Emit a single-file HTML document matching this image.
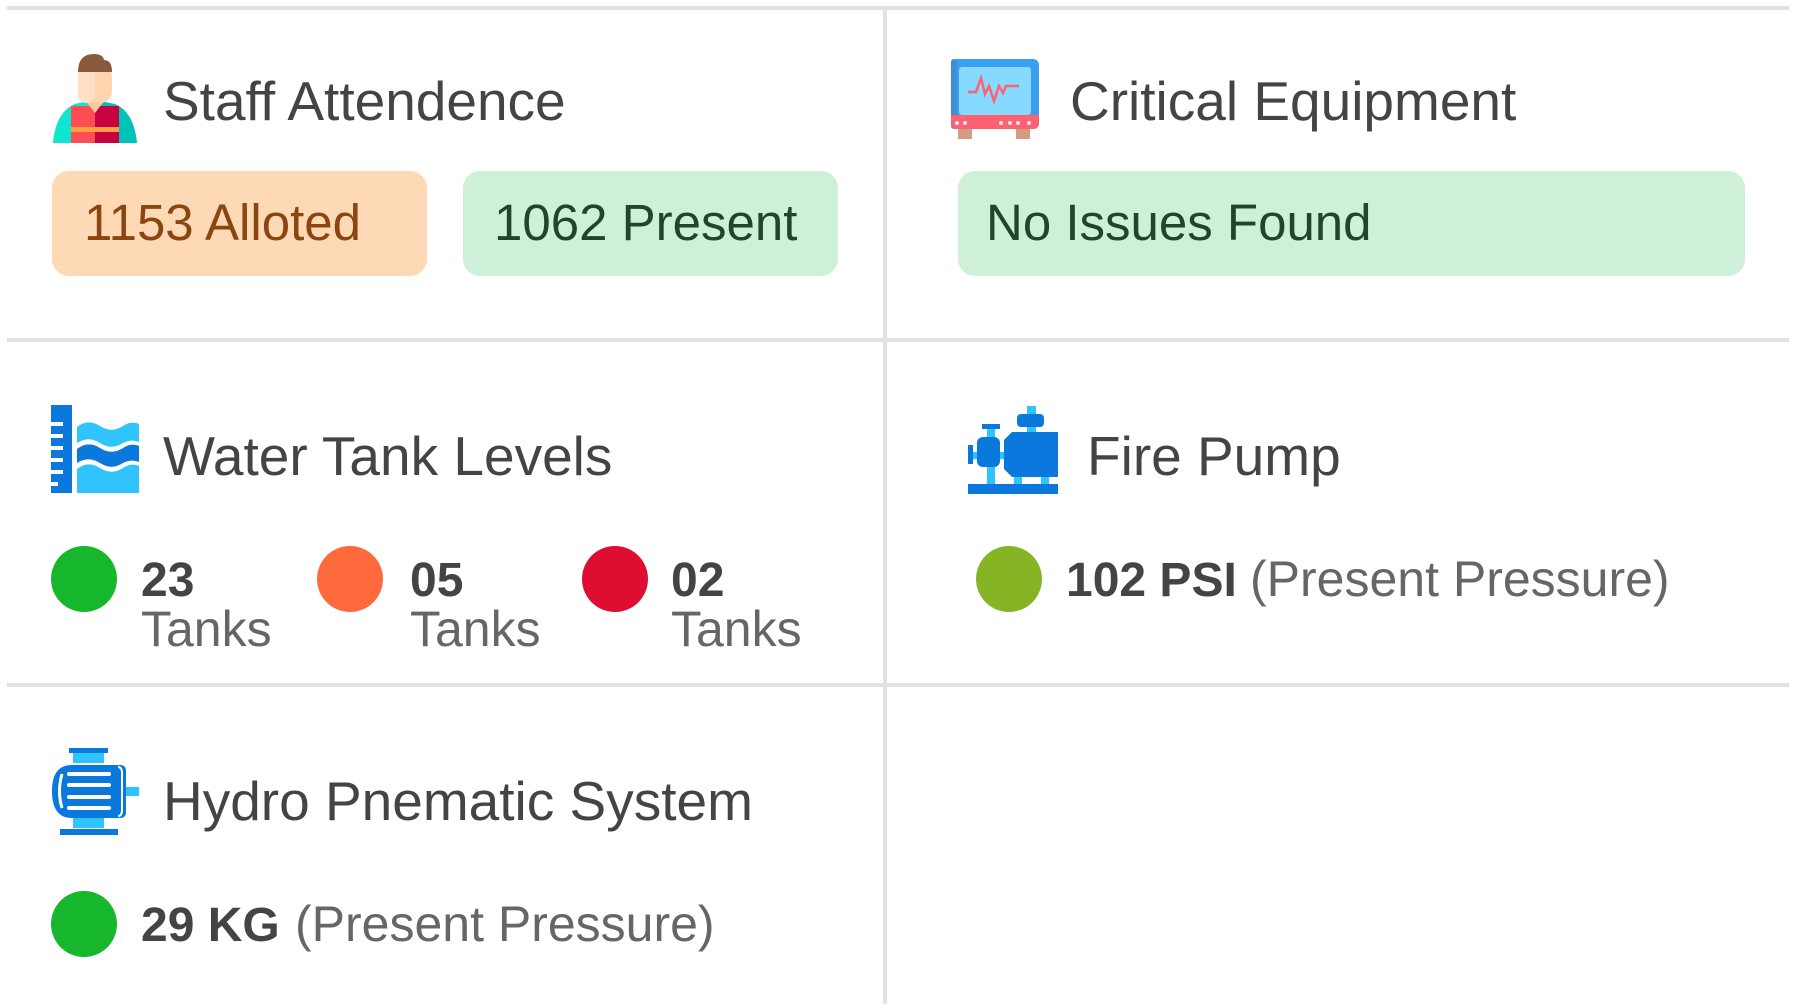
<!DOCTYPE html>
<html><head><meta charset="utf-8"><style>
html,body{margin:0;padding:0;background:#fff;}
svg{display:block}
text{font-family:"Liberation Sans",sans-serif;}
</style></head><body>
<svg width="1794" height="1004" viewBox="0 0 1794 1004" xmlns="http://www.w3.org/2000/svg">
<rect x="7" y="6" width="1782" height="4" fill="#e2e2e2"/>
<rect x="7" y="338" width="1782" height="4" fill="#e2e2e2"/>
<rect x="7" y="683" width="1782" height="4" fill="#e2e2e2"/>
<rect x="883" y="10" width="4" height="994" fill="#e2e2e2"/>

<!-- staff icon -->
<g>
<path d="M53 143 Q56 112 75 104 L95 100 L115 104 Q134 112 137 143 Z" fill="#00c2b8"/>
<path d="M53 143 Q56 112 75 104 L95 100 L95 143 Z" fill="#0ee6cf"/>
<rect x="71" y="106" width="24" height="37" fill="#ff4d55"/>
<rect x="95" y="106" width="24" height="37" fill="#c8003f"/>
<rect x="71" y="127" width="48" height="5" fill="#ffa143"/>
<path d="M85 100 L95 113 L105 100 Z" fill="#ffc89a"/>
<rect x="78" y="65" width="34" height="38" rx="12" fill="#ffd5b0"/>
<rect x="78" y="65" width="17" height="38" rx="8" fill="#ffe0c4"/>
<path d="M78 72 Q78 54 94 54 Q103 54 104 60 Q112 60 112 72 Z" fill="#8b5a3c"/>
</g>
<text x="163" y="120" font-size="55" fill="#444">Staff Attendence</text>

<rect x="52" y="171" width="375" height="105" rx="17" fill="#fdd9b5"/>
<text x="84" y="240" font-size="51" fill="#8b4510">1153 Alloted</text>
<rect x="463" y="171" width="375" height="105" rx="17" fill="#cff0d8"/>
<text x="494" y="240" font-size="51" fill="#1d4727">1062 Present</text>

<!-- monitor -->
<g>
<rect x="958" y="128" width="14" height="11" fill="#d29d82"/>
<rect x="1016" y="128" width="14" height="11" fill="#d29d82"/>
<rect x="951" y="59" width="88" height="70" rx="6" fill="#3a9ff0"/>
<rect x="951" y="59" width="6" height="70" rx="3" fill="#3f8fd6"/>
<rect x="959" y="67" width="72" height="48" rx="3" fill="#86d9ff"/>
<path d="M951 115 L1039 115 L1039 123 Q1039 129 1033 129 L957 129 Q951 129 951 123 Z" fill="#ff6170"/>
<g fill="#dfe6ff"><circle cx="957" cy="123" r="2"/><circle cx="965" cy="123" r="2"/><circle cx="1001" cy="123" r="2"/><circle cx="1010" cy="123" r="2"/><circle cx="1018" cy="123" r="2"/><circle cx="1029" cy="123" r="2"/></g>
<polyline points="968,92 976,92 981,78 985,94 989,86 994,101 999,86 1003,93 1006,86 1019,86" fill="none" stroke="#ff6170" stroke-width="2.5"/>
</g>
<text x="1070" y="120" font-size="55" fill="#444">Critical Equipment</text>
<rect x="958" y="171" width="787" height="105" rx="17" fill="#cff0d8"/>
<text x="986" y="240" font-size="51" fill="#1d4727">No Issues Found</text>

<!-- water icon -->
<g>
<rect x="51" y="405" width="21" height="88" fill="#0a78dc"/>
<g fill="#fff"><rect x="51" y="422" width="12" height="4"/><rect x="51" y="434" width="12" height="4"/><rect x="51" y="446" width="12" height="4"/><rect x="51" y="458" width="12" height="4"/><rect x="51" y="470" width="12" height="4"/><rect x="51" y="482" width="7" height="4"/></g>
<path d="M77 427 C85 421 92 421 100 426 C108 431 115 431 123 426 C129 422 134 422 139 424 L139 442 C134 440 129 440 123 443 C115 448 108 448 100 443 C92 438 85 438 77 443 Z" fill="#2fc4fb"/>
<path d="M77 449 C85 443 92 443 100 448 C108 453 115 453 123 448 C129 444 134 444 139 446 L139 462 C134 460 129 460 123 463 C115 468 108 468 100 463 C92 458 85 458 77 463 Z" fill="#0a78dc"/>
<path d="M77 469 C85 463 92 463 100 468 C108 473 115 473 123 468 C129 464 134 464 139 466 L139 493 L77 493 Z" fill="#2fc4fb"/>
</g>
<text x="163" y="475" font-size="55" fill="#444">Water Tank Levels</text>

<circle cx="84" cy="579" r="33" fill="#16b72c"/>
<text x="141" y="596" font-size="48" font-weight="bold" fill="#444">23</text>
<text x="141" y="646" font-size="50" fill="#666">Tanks</text>
<circle cx="350" cy="579" r="33" fill="#ff6a3d"/>
<text x="410" y="596" font-size="48" font-weight="bold" fill="#444">05</text>
<text x="410" y="646" font-size="50" fill="#666">Tanks</text>
<circle cx="615" cy="579" r="33" fill="#e00d33"/>
<text x="671" y="596" font-size="48" font-weight="bold" fill="#444">02</text>
<text x="671" y="646" font-size="50" fill="#666">Tanks</text>

<!-- fire pump icon -->
<g>
<rect x="987" y="427" width="8" height="58" fill="#2fc4fb"/>
<rect x="982" y="424" width="18" height="5" fill="#0a78dc"/>
<rect x="1027" y="406" width="9" height="28" fill="#2fc4fb"/>
<rect x="1017" y="414" width="27" height="13" rx="4" fill="#0a78dc"/>
<rect x="1014" y="474" width="8" height="11" fill="#2fc4fb"/>
<rect x="1041" y="474" width="8" height="11" fill="#2fc4fb"/>
<rect x="973" y="452" width="32" height="7" fill="#2fc4fb"/>
<rect x="968" y="445" width="5" height="19" fill="#0a78dc"/>
<rect x="977" y="437" width="23" height="30" rx="6" fill="#0a78dc"/>
<path d="M1012 432 L1058 432 L1058 477 L1012 477 L1004 469 L1004 440 Z" fill="#0a78dc"/>
<rect x="968" y="484" width="90" height="10" fill="#0a78dc"/>
</g>
<text x="1087" y="475" font-size="55" fill="#444">Fire Pump</text>
<circle cx="1009" cy="579" r="33" fill="#86b425"/>
<text x="1066" y="596" font-size="48" font-weight="bold" fill="#444">102 PSI</text>
<text x="1250" y="596" font-size="50" fill="#666">(Present Pressure)</text>

<!-- motor icon -->
<g>
<rect x="73" y="751" width="31" height="12" fill="#2fc4fb"/>
<rect x="69" y="748" width="39" height="5" fill="#0a78dc"/>
<rect x="73" y="818" width="31" height="10" fill="#2fc4fb"/>
<rect x="60" y="829" width="58" height="6" fill="#0a78dc"/>
<rect x="122" y="787" width="17" height="9" fill="#2fc4fb"/>
<path d="M72 765 L120 765 Q126 765 126 771 L126 812 Q126 818 120 818 L72 818 Q52 818 52 791 Q52 765 72 765 Z" fill="#0a78dc"/>
<g stroke="#fff" stroke-width="4" stroke-linecap="round"><line x1="69" y1="774" x2="109" y2="774"/><line x1="69" y1="785" x2="109" y2="785"/><line x1="69" y1="797" x2="109" y2="797"/><line x1="69" y1="808" x2="109" y2="808"/></g>
<path d="M62 774 Q57 791 62 808" stroke="#fff" stroke-width="3" fill="none"/>
<path d="M118 767 Q122 767 122 773 L122 810 Q122 816 118 816" stroke="#fff" stroke-width="2" fill="none"/>
</g>
<text x="163" y="820" font-size="55" fill="#444">Hydro Pnematic System</text>
<circle cx="84" cy="924" r="33" fill="#16b72c"/>
<text x="141" y="941" font-size="48" font-weight="bold" fill="#444">29 KG</text>
<text x="295" y="941" font-size="50" fill="#666">(Present Pressure)</text>
</svg>
</body></html>
